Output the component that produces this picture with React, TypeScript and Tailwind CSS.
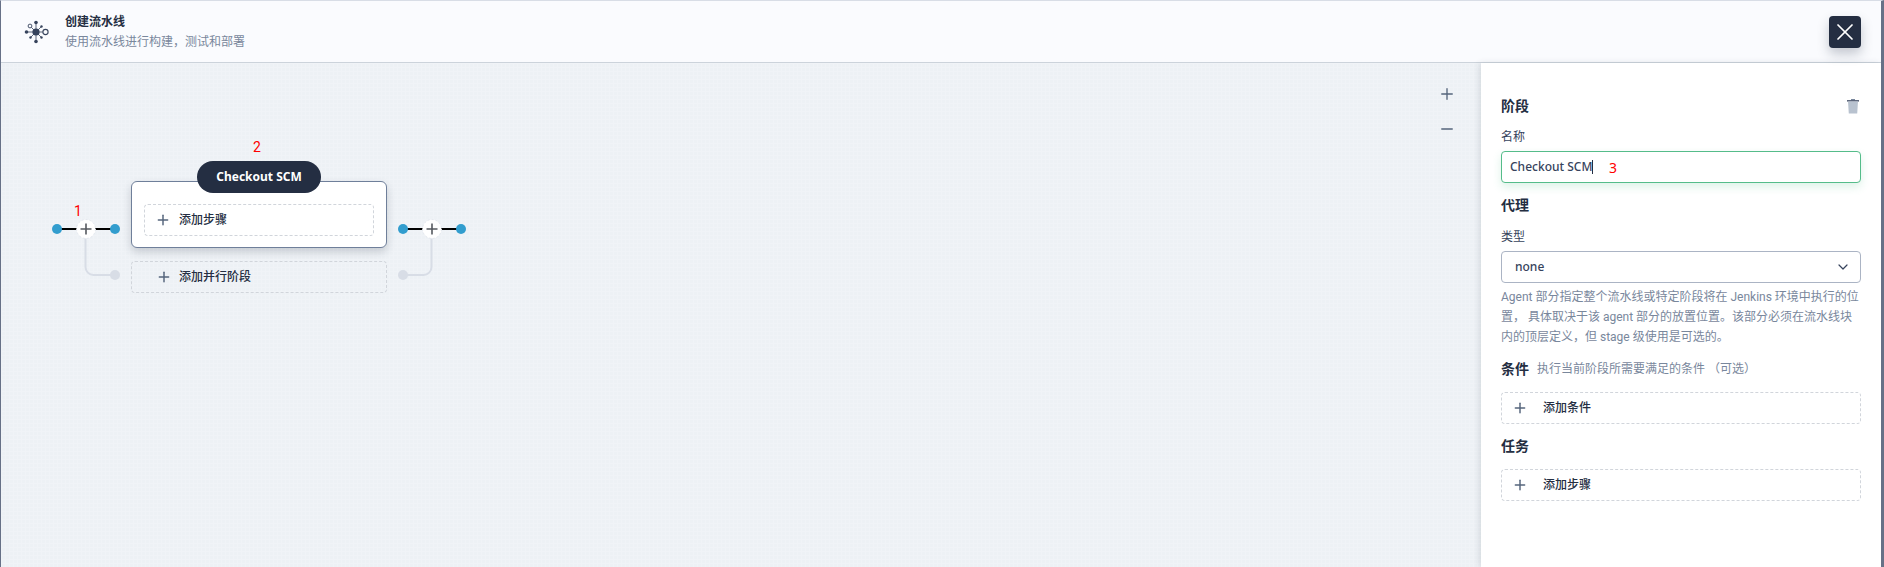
import { X, Plus, Minus, ChevronDown } from "lucide-react";

const font = { fontFamily: '"Roboto", "Noto Sans CJK SC", sans-serif' };
const latinFont = { fontFamily: '"Noto Sans", "Noto Sans CJK SC", sans-serif' };

function PipelineIcon() {
  return (
    <svg width="24" height="24" viewBox="0 0 24 24" className="overflow-visible text-[#36435c]">
      <path d="M12 4v16M4 12h15M6.5 6.5l11 11M17.5 6.5l-11 11" stroke="currentColor" strokeWidth="0.8" />
      <circle cx="12" cy="12" r="3.6" fill="currentColor" />
      <circle cx="12" cy="2.5" r="1.8" fill="currentColor" />
      <circle cx="12" cy="21.5" r="1.8" fill="currentColor" />
      <circle cx="2.5" cy="12" r="1.8" fill="currentColor" />
      <circle cx="21.5" cy="12" r="2.6" fill="#fafbfe" stroke="currentColor" strokeWidth="1.1" />
      <circle cx="6" cy="6" r="1.9" fill="#fafbfe" stroke="currentColor" strokeWidth="0.9" />
      <circle cx="17.5" cy="6.5" r="1.2" fill="currentColor" />
      <circle cx="6.5" cy="17.5" r="1.2" fill="currentColor" />
      <circle cx="17.5" cy="17.5" r="1.2" fill="currentColor" />
    </svg>
  );
}

function TrashIcon() {
  return (
    <svg width="14" height="16" viewBox="0 0 14 16" className="mr-[1px]">
      <path d="M5 1h4v1.2H5z" fill="#79879c" />
      <path d="M1 2.2h12v1.3H1z" fill="#36435c" />
      <path d="M2 3.5h10L11.2 15.5H2.8z" fill="#b8c2cf" />
    </svg>
  );
}

function AddButton({ label, className }: { label: string; className: string }) {
  return (
    <div className={`flex items-center rounded border border-dashed border-[#d1d5db] text-xs font-medium text-[#242e42] ${className}`}>
      <Plus size={16} strokeWidth={2.2} className="shrink-0 text-[#55657c]" />
      <span>{label}</span>
    </div>
  );
}

// line with two blue dots and a plus in the middle, branch goes down to a gray dot
function Junction({ side }: { side: "left" | "right" }) {
  const branch = side === "left" ? "M29.5 9V38a8 8 0 0 0 8 8H55" : "M29.5 9V38a8 8 0 0 1-8 8H5";
  const grayX = side === "left" ? 59 : 1;
  return (
    <svg width="70" height="64" viewBox="0 0 70 64" className="absolute overflow-visible">
      <path d={branch} fill="none" stroke="#d8dde6" strokeWidth="2" />
      <circle cx={grayX} cy="46" r="5" fill="#d8dde6" />
      <path d="M1 0H58" stroke="#000" strokeWidth="2" />
      <circle cx="1" cy="0" r="5" fill="#329dce" />
      <circle cx="59" cy="0" r="5" fill="#329dce" />
      <circle cx="30" cy="0" r="9.5" fill="#fff" stroke="#e3e7ee" strokeWidth="1" strokeDasharray="2 2" />
      <path d="M30 -5.5V5.5M24.5 0H35.5" stroke="#55595f" strokeWidth="1.6" />
    </svg>
  );
}

export default function App() {
  return (
    <div style={font} className="flex h-[567px] w-[1884px] flex-col overflow-hidden border-t border-l border-r-[3px] border-t-[#d8dde6] border-l-[#677187] border-r-[#677187] bg-white">
      <header className="flex h-[62px] shrink-0 items-center border-b border-[#ccd3db] bg-[#fafbfe] pl-[23px] pr-5">
        <PipelineIcon />
        <div className="ml-[17px]">
          <div className="text-xs leading-5 font-semibold text-[#242e42]">创建流水线</div>
          <div className="text-xs leading-5 text-[#79879c]">使用流水线进行构建，测试和部署</div>
        </div>
        <button className="relative z-10 mt-[1px] ml-auto flex h-8 w-8 items-center justify-center rounded bg-[#242e42] text-white shadow-[0_6px_12px_rgba(36,46,66,0.25)]">
          <X size={28} strokeWidth={1.5} />
        </button>
      </header>

      <div className="flex min-h-0 flex-1">
        <main className="relative flex-1 bg-[#edf1f5] bg-[linear-gradient(#f0f3f7_1px,transparent_1px),linear-gradient(90deg,#f0f3f7_1px,transparent_1px)] bg-[size:4px_4px]">
          <div className="absolute top-[118px] left-[130px] h-[67px] w-[256px] rounded-md border border-[#6f7f9a] bg-white px-3 pt-[22px] shadow-[0_4px_8px_rgba(36,46,66,0.2)]">
            <AddButton label="添加步骤" className="h-8 gap-2 pl-[10px]" />
          </div>
          <div style={latinFont} className="absolute top-[98px] left-[196px] flex h-8 w-[124px] items-center justify-center rounded-full bg-[#242e42] text-xs font-bold text-white">
            Checkout SCM
          </div>
          <AddButton label="添加并行阶段" className="absolute top-[198px] left-[130px] h-8 w-[256px] gap-[7px] pl-6" />

          <div className="absolute top-[166px] left-[55px]"><Junction side="left" /></div>
          <div className="absolute top-[166px] left-[401px]"><Junction side="right" /></div>

          <span className="absolute top-[138px] left-[73px] text-sm leading-5 text-[#f00]">1</span>
          <span className="absolute top-[74px] left-[252px] text-sm leading-5 text-[#f00]">2</span>

          <div className="absolute top-[22px] right-[25px] flex flex-col gap-[17px] text-[#55657c]">
            <Plus size={18} strokeWidth={1.8} />
            <Minus size={18} strokeWidth={1.8} />
          </div>
        </main>

        <aside className="relative w-[400px] shrink-0 bg-white px-5 pt-[33px] shadow-[-2px_0_6px_rgba(36,46,66,0.12)]">
          <div className="flex h-5 items-center justify-between">
            <h3 className="text-sm font-semibold text-[#242e42]">阶段</h3>
            <TrashIcon />
          </div>
          <label className="mt-[11px] block text-xs leading-5 text-[#36435c]">名称</label>
          <div style={latinFont} className="relative mt-1 flex h-8 items-center rounded border border-[#55bc8a] bg-white pl-2 text-xs font-medium text-[#36435c] shadow-[0_4px_8px_rgba(85,188,138,0.2)]">
            Checkout SCM
            <span className="h-[14px] w-px bg-[#242e42]" />
            <span className="absolute top-[6px] left-[107px] text-sm leading-5 font-normal text-[#f00]">3</span>
          </div>
          <h3 className="mt-3 text-sm leading-5 font-semibold text-[#242e42]">代理</h3>
          <label className="mt-3 block text-xs leading-5 text-[#36435c]">类型</label>
          <div style={latinFont} className="mt-1 flex h-8 items-center justify-between rounded border border-[#abb4c4] pr-[9px] pl-[13px] text-xs font-medium text-[#36435c]">
            none
            <ChevronDown size={16} strokeWidth={1.8} />
          </div>
          <p className="mt-1 text-xs leading-5 text-[#79879c]">
            Agent 部分指定整个流水线或特定阶段将在 Jenkins 环境中执行的位置， 具体取决于该 agent 部分的放置位置。该部分必须在流水线块内的顶层定义，但 stage 级使用是可选的。
          </p>
          <div className="mt-3 flex h-5 items-center">
            <h3 className="text-sm font-semibold text-[#242e42]">条件</h3>
            <span className="ml-2 text-xs text-[#79879c]">执行当前阶段所需要满足的条件 （可选）</span>
          </div>
          <AddButton label="添加条件" className="mt-[13px] h-8 gap-[15px] pl-[10px]" />
          <h3 className="mt-3 text-sm leading-5 font-semibold text-[#242e42]">任务</h3>
          <AddButton label="添加步骤" className="mt-[13px] h-8 gap-[15px] pl-[10px]" />
        </aside>
      </div>
    </div>
  );
}
